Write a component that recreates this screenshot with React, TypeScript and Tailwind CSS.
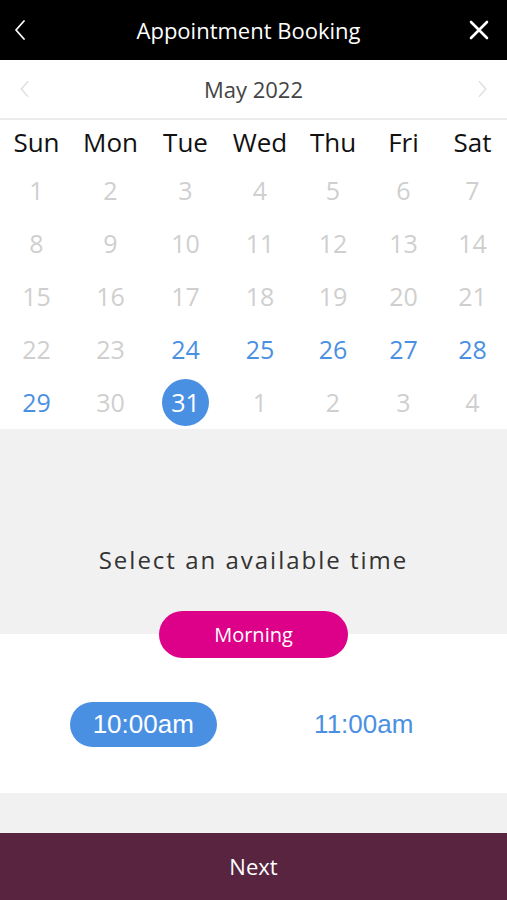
const weekdays = ['Sun', 'Mon', 'Tue', 'Wed', 'Thu', 'Fri', 'Sat'];

type Day = { n: number; active?: boolean; selected?: boolean };

const rows: Day[][] = [
  [1, 2, 3, 4, 5, 6, 7].map((n) => ({ n })),
  [8, 9, 10, 11, 12, 13, 14].map((n) => ({ n })),
  [15, 16, 17, 18, 19, 20, 21].map((n) => ({ n })),
  [
    { n: 22 },
    { n: 23 },
    { n: 24, active: true },
    { n: 25, active: true },
    { n: 26, active: true },
    { n: 27, active: true },
    { n: 28, active: true },
  ],
  [
    { n: 29, active: true },
    { n: 30 },
    { n: 31, selected: true },
    { n: 1 },
    { n: 2 },
    { n: 3 },
    { n: 4 },
  ],
];

function Chevron({ dir, className, width = 2.2 }: { dir: 'left' | 'right'; className?: string; width?: number }) {
  return (
    <svg viewBox="0 0 16 24" className={className} fill="none" stroke="currentColor" strokeWidth={width} strokeLinecap="round" strokeLinejoin="round">
      {dir === 'left' ? <path d="M12 3 L4 12 L12 21" /> : <path d="M4 3 L12 12 L4 21" />}
    </svg>
  );
}

export default function App() {
  return (
    <div className="w-[507px] h-[900px] flex flex-col bg-white overflow-hidden font-['Open_Sans',sans-serif]">
      {/* Header */}
      <div className="h-[60px] bg-black flex items-center justify-between px-[12px] text-white">
        <Chevron dir="left" width={1.8} className="w-[16px] h-[24px]" />
        <span className="text-[22px]">Appointment Booking</span>
        <svg viewBox="0 0 20 20" className="w-[20px] h-[20px] mr-[6px]" fill="none" stroke="currentColor" strokeWidth="2.6" strokeLinecap="round">
          <path d="M2 2 L18 18 M18 2 L2 18" />
        </svg>
      </div>

      {/* Month nav */}
      <div className="h-[60px] flex items-center justify-between px-[18px] border-b-2 border-[#ececec]">
        <Chevron dir="left" width={1.6} className="w-[13px] h-[24px] text-[#dcdcdc]" />
        <span className="text-[22px] text-[#444]">May 2022</span>
        <Chevron dir="right" width={1.6} className="w-[13px] h-[24px] text-[#dcdcdc]" />
      </div>

      {/* Calendar */}
      <div className="grid grid-cols-[73px_75px_75px_74px_72px_69px_69px] h-[44px] items-center">
        {weekdays.map((d) => (
          <span key={d} className="text-center text-[26px] text-[#111]">
            {d}
          </span>
        ))}
      </div>
      {rows.map((row, i) => (
        <div key={i} className="grid grid-cols-[73px_75px_75px_74px_72px_69px_69px] h-[53px] items-center">
          {row.map((d, j) => (
            <div key={j} className="flex justify-center">
              {d.selected ? (
                <span className="w-[47px] h-[47px] rounded-full bg-[#4a90e2] text-white text-[25px] flex items-center justify-center">
                  {d.n}
                </span>
              ) : (
                <span className={`text-[25px] ${d.active ? 'text-[#4a90e2]' : 'text-[#cfcfcf]'}`}>{d.n}</span>
              )}
            </div>
          ))}
        </div>
      ))}

      {/* Time selection */}
      <div className="bg-[#f1f1f1] flex flex-col items-center pt-[115px]">
        <span className="text-[24px] leading-[32px] tracking-[2px] text-[#333]">Select an available time</span>
        <div className="relative z-10 mt-[35px] -mb-[24px] w-[189px] h-[47px] rounded-full bg-[#dd0088] text-white text-[20px] flex items-center justify-center">
          Morning
        </div>
      </div>
      <div className="h-[159px] bg-white grid grid-cols-2 px-[33px] pt-[68px] font-['Liberation_Sans',Arial,sans-serif]">
        <div className="flex justify-center">
          <span className="w-[147px] h-[45px] rounded-full bg-[#4a90e2] text-white text-[26px] flex items-center justify-center">
            10:00am
          </span>
        </div>
        <div className="flex justify-center">
          <span className="h-[45px] text-[#4a90e2] text-[26px] flex items-center">11:00am</span>
        </div>
      </div>
      <div className="h-[40px] bg-[#f1f1f1]" />
      <div className="flex-1 bg-[#58243f] flex items-center justify-center text-white text-[22px]">Next</div>
    </div>
  );
}
